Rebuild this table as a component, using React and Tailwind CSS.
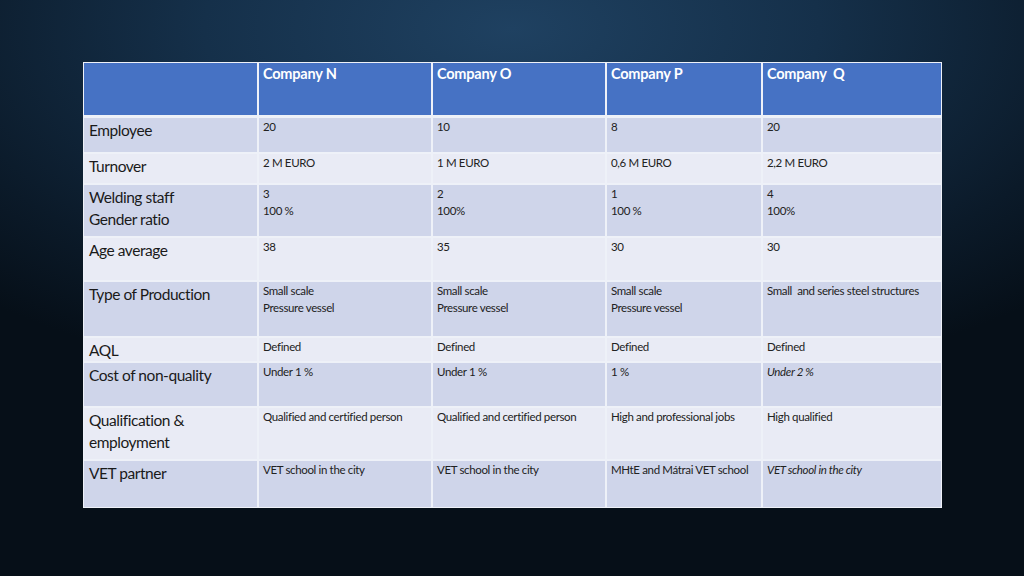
import React from 'react';

const companies = ['Company N', 'Company O', 'Company P', 'Company  Q'];

// label, row height, darker band, cells (each cell: array of lines, optional italic flag)
const rows = [
  { label: ['Employee'], h: 'h-[34px]', dark: true, cells: [['20'], ['10'], ['8'], ['20']] },
  { label: ['Turnover'], h: 'h-[29px]', dark: false, cells: [['2 M EURO'], ['1 M EURO'], ['0,6 M EURO'], ['2,2 M EURO']] },
  { label: ['Welding staff', 'Gender ratio'], h: 'h-[51px]', dark: true, cells: [['3', '100 %'], ['2', '100%'], ['1', '100 %'], ['4', '100%']] },
  { label: ['Age average'], h: 'h-[42px]', dark: false, cells: [['38'], ['35'], ['30'], ['30']] },
  {
    label: ['Type of Production'], h: 'h-[54px]', dark: true,
    cells: [['Small scale', 'Pressure vessel'], ['Small scale', 'Pressure vessel'], ['Small scale', 'Pressure vessel'], ['Small  and series steel structures']],
  },
  { label: ['AQL'], h: 'h-[23px]', dark: false, cells: [['Defined'], ['Defined'], ['Defined'], ['Defined']] },
  { label: ['Cost of non-quality'], h: 'h-[43px]', dark: true, cells: [['Under 1 %'], ['Under 1 %'], ['1 %'], ['Under 2 %']], italicLast: true },
  {
    label: ['Qualification &', 'employment'], h: 'h-[51px]', dark: false,
    cells: [['Qualified and certified person'], ['Qualified and certified person'], ['High and professional jobs'], ['High qualified']],
  },
  {
    label: ['VET partner'], h: 'h-[46px]', dark: true,
    cells: [['VET school in the city'], ['VET school in the city'], ['MHtE and Mátrai VET school'], ['VET school in the city']],
    italicLast: true,
  },
];

export default function App() {
  return (
    <div
      className="w-[1024px] h-[576px] overflow-hidden bg-[radial-gradient(ellipse_75%_65%_at_50%_5%,#1f4161_0%,#15304a_40%,#0b1a29_78%,#060f18_100%)] pt-[62px] pl-[83px]"
      style={{ fontFamily: 'Lato, "Open Sans", sans-serif' }}
    >
      <div className="w-[859px] bg-[#eef1f8] p-[1px]">
        <div className="grid grid-cols-[173px_172px_172px_154px_178px] gap-x-[2px]">
          {/* header */}
          <div className="h-[52px] bg-[#4672c4]" />
          {companies.map((c) => (
            <div key={c} className="h-[52px] bg-[#4672c4] px-[4px] pt-0 text-[14.5px] font-bold text-white whitespace-pre tracking-[-0.2px]">
              {c}
            </div>
          ))}
        </div>
        <div className="h-[3px]" />
        {rows.map((r, i) => (
          <div key={i} className={`grid grid-cols-[173px_172px_172px_154px_178px] gap-x-[2px] ${i > 0 ? 'mt-[2px]' : ''}`}>
            <div className={`${r.h} ${r.dark ? 'bg-[#cfd5ea]' : 'bg-[#e9ebf5]'} px-[5px] pt-[1px] text-[15.5px] leading-[22px] text-[#1a1a1a] tracking-[-0.45px]`}>
              {r.label.map((l) => (
                <div key={l}>{l}</div>
              ))}
            </div>
            {r.cells.map((cell, j) => (
              <div
                key={j}
                className={`${r.h} ${r.dark ? 'bg-[#cfd5ea]' : 'bg-[#e9ebf5]'} px-[4px] pt-0 text-[11.5px] leading-[17px] text-[#222] tracking-[-0.35px] whitespace-pre ${r.italicLast && j === 3 ? 'italic' : ''}`}
              >
                {cell.map((l) => (
                  <div key={l}>{l}</div>
                ))}
              </div>
            ))}
          </div>
        ))}
      </div>
    </div>
  );
}
